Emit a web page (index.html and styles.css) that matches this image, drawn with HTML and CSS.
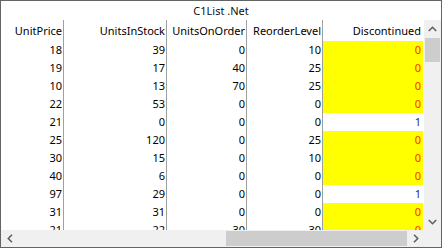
FILE: index.html
```html
<!DOCTYPE html>
<html>
<head>
<meta charset="utf-8">
<link rel="stylesheet" href="styles.css">
</head>
<body>
<div class="frame">
  <div class="title">C1List .Net</div>
  <div class="main">
    <div class="grid">
      <div class="row head">
        <div class="cell c1">UnitPrice</div>
        <div class="cell c2">UnitsInStock</div>
        <div class="cell c3">UnitsOnOrder</div>
        <div class="cell c4">ReorderLevel</div>
        <div class="cell c5">Discontinued</div>
      </div>
      <div class="row"><div class="cell c1">18</div><div class="cell c2">39</div><div class="cell c3">0</div><div class="cell c4">10</div><div class="cell c5 off">0</div></div>
      <div class="row"><div class="cell c1">19</div><div class="cell c2">17</div><div class="cell c3">40</div><div class="cell c4">25</div><div class="cell c5 off">0</div></div>
      <div class="row"><div class="cell c1">10</div><div class="cell c2">13</div><div class="cell c3">70</div><div class="cell c4">25</div><div class="cell c5 off">0</div></div>
      <div class="row"><div class="cell c1">22</div><div class="cell c2">53</div><div class="cell c3">0</div><div class="cell c4">0</div><div class="cell c5 off">0</div></div>
      <div class="row"><div class="cell c1">21</div><div class="cell c2">0</div><div class="cell c3">0</div><div class="cell c4">0</div><div class="cell c5 on">1</div></div>
      <div class="row"><div class="cell c1">25</div><div class="cell c2">120</div><div class="cell c3">0</div><div class="cell c4">25</div><div class="cell c5 off">0</div></div>
      <div class="row"><div class="cell c1">30</div><div class="cell c2">15</div><div class="cell c3">0</div><div class="cell c4">10</div><div class="cell c5 off">0</div></div>
      <div class="row"><div class="cell c1">40</div><div class="cell c2">6</div><div class="cell c3">0</div><div class="cell c4">0</div><div class="cell c5 off">0</div></div>
      <div class="row"><div class="cell c1">97</div><div class="cell c2">29</div><div class="cell c3">0</div><div class="cell c4">0</div><div class="cell c5 on">1</div></div>
      <div class="row"><div class="cell c1">31</div><div class="cell c2">31</div><div class="cell c3">0</div><div class="cell c4">0</div><div class="cell c5 off">0</div></div>
      <div class="row"><div class="cell c1">21</div><div class="cell c2">22</div><div class="cell c3">30</div><div class="cell c4">30</div><div class="cell c5 off">0</div></div>
    </div>
    <div class="vscroll">
      <div class="arrow-box">
        <svg width="9" height="6" viewBox="0 0 9 6"><path d="M0.8 5 L4.5 1.3 L8.2 5" fill="none" stroke="#606060" stroke-width="1.6"/></svg>
      </div>
      <div class="vtrack"><div class="vthumb"></div></div>
      <div class="arrow-box">
        <svg width="9" height="6" viewBox="0 0 9 6"><path d="M0.8 1 L4.5 4.7 L8.2 1" fill="none" stroke="#606060" stroke-width="1.6"/></svg>
      </div>
    </div>
  </div>
  <div class="bottom">
    <div class="hscroll">
      <div class="arrow-box h">
        <svg width="6" height="9" viewBox="0 0 6 9"><path d="M5 0.8 L1.3 4.5 L5 8.2" fill="none" stroke="#606060" stroke-width="1.6"/></svg>
      </div>
      <div class="htrack"><div class="hthumb"></div></div>
      <div class="arrow-box h">
        <svg width="6" height="9" viewBox="0 0 6 9"><path d="M1 0.8 L4.7 4.5 L1 8.2" fill="none" stroke="#606060" stroke-width="1.6"/></svg>
      </div>
    </div>
    <div class="corner"></div>
  </div>
</div>
</body>
</html>
```

FILE: styles.css
```css
html, body {
  margin: 0;
  padding: 0;
  background: #ffffff;
}

.frame {
  box-sizing: border-box;
  width: 442px;
  height: 248px;
  border: 1px solid #646464;
  display: flex;
  flex-direction: column;
  font-family: "Noto Sans", "Open Sans", sans-serif;
  font-size: 11px;
  color: #000000;
  background: #ffffff;
}

.title {
  height: 19px;
  line-height: 19px;
  text-align: center;
  color: #101010;
}

.main {
  display: flex;
  height: 210px;
}

.grid {
  width: 423px;
  height: 210px;
  overflow: hidden;
}

.row {
  display: flex;
  height: 18px;
  line-height: 18px;
}

.row.head {
  height: 21px;
  line-height: 21px;
}

.cell {
  box-sizing: border-box;
  height: 100%;
  text-align: right;
  padding-right: 1px;
  border-right: 1px solid #a0a0a0;
  white-space: nowrap;
  overflow: hidden;
}

.c1 { width: 63px; }
.c2 { width: 103px; }
.c3 { width: 80px; }
.c4 { width: 76px; }
.c5 { width: 101px; border-right-color: #ffffff; padding-right: 2px; }

.off {
  background: #ffff00;
  color: #ff3000;
}

.on {
  color: #1e2a78;
}

.vscroll {
  width: 17px;
  height: 210px;
  background: #f0f0f0;
  display: flex;
  flex-direction: column;
}

.arrow-box {
  width: 17px;
  height: 17px;
  display: flex;
  align-items: center;
  justify-content: center;
  flex: none;
}

.vtrack {
  flex: 1;
  padding: 1px 1px 0 1px;
}

.vthumb {
  width: 15px;
  height: 24px;
  background: #cdcdcd;
}

.bottom {
  display: flex;
  height: 17px;
}

.hscroll {
  width: 423px;
  height: 17px;
  background: #f0f0f0;
  display: flex;
}

.htrack {
  flex: 1;
  padding: 1px 0;
  display: flex;
  justify-content: flex-end;
}

.hthumb {
  width: 181px;
  height: 15px;
  background: #cdcdcd;
}

.corner {
  width: 17px;
  height: 17px;
  background: #f0f0f0;
}
```
